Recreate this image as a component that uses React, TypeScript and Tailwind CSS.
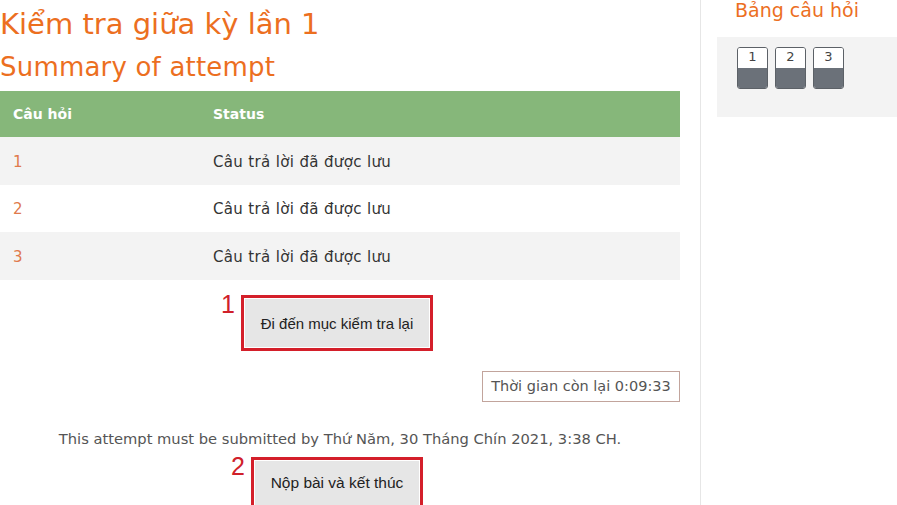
const font = { fontFamily: '"DejaVu Sans", "Noto Sans", sans-serif' };

const rows = [
  { n: "1", status: "Câu trả lời đã được lưu", shaded: true },
  { n: "2", status: "Câu trả lời đã được lưu", shaded: false },
  { n: "3", status: "Câu trả lời đã được lưu", shaded: true },
];

function Marked({ label, children }: { label: string; children: React.ReactNode }) {
  return (
    <div className="relative">
      <span
        className="absolute -left-[20px] -top-[3px] text-[25px] leading-none text-[#d0202a]"
        style={{ fontFamily: '"Liberation Sans", Arial, sans-serif' }}
      >
        {label}
      </span>
      <div className="border-[3px] border-[#d41f2a] p-px">{children}</div>
    </div>
  );
}

function NavButton({ n }: { n: string }) {
  return (
    <div className="flex h-[42px] w-[31px] flex-col overflow-hidden rounded-[3px] border border-[#5c6167]">
      <div className="flex h-[20px] items-start justify-center bg-white text-[13px] leading-[18px] text-[#444]">
        {n}
      </div>
      <div className="flex-1 bg-[#6b7179]" />
    </div>
  );
}

export default function App() {
  return (
    <div className="flex h-[505px] w-[897px] overflow-hidden bg-white" style={font}>
      <div className="w-[701px] shrink-0 border-r border-[#e6e6e6] pr-[20px]">
        <h1 className="mt-[6px] text-[29px] leading-[36px] text-[#ec6f1f]">
          Kiểm tra giữa kỳ lần 1
        </h1>
        <h2 className="mt-[10px] text-[26px] leading-[30px] tracking-[0.2px] text-[#ec6f1f]">
          Summary of attempt
        </h2>

        <table className="mt-[9px] w-[680px] border-collapse text-[14px]">
          <thead>
            <tr className="h-[46px] bg-[#86b77a] text-left text-white">
              <th className="w-[213px] pl-[13px] font-bold">Câu hỏi</th>
              <th className="font-bold">Status</th>
            </tr>
          </thead>
          <tbody>
            {rows.map((r) => (
              <tr key={r.n} className={r.shaded ? "h-[48px] bg-[#f3f3f3]" : "h-[47px] bg-white"}>
                <td className="pl-[13px] pt-[2px] text-[15px] text-[#e07a4c]">{r.n}</td>
                <td className="pt-[2px] text-[15px] tracking-[0.35px] text-[#333]">{r.status}</td>
              </tr>
            ))}
          </tbody>
        </table>

        <div className="mt-[15px] flex justify-center pr-[6px]">
          <Marked label="1">
            <button
              className="h-[48px] w-[184px] bg-[#e6e6e6] pt-[2px] text-[15px] text-[#222]"
              style={{ fontFamily: '"Liberation Sans", Arial, sans-serif' }}
            >
              Đi đến mục kiểm tra lại
            </button>
          </Marked>
        </div>

        <div className="mt-[20px] flex justify-end">
          <div className="flex h-[31px] w-[198px] items-center justify-center border border-[#c2a49c] text-[14.5px] text-[#555]">
            Thời gian còn lại 0:09:33
          </div>
        </div>

        <p className="mt-[26px] text-center text-[14.7px] text-[#555]">
          This attempt must be submitted by Thứ Năm, 30 Tháng Chín 2021, 3:38 CH.
        </p>

        <div className="mt-[7px] flex justify-center pr-[6px]">
          <Marked label="2">
            <button
              className="h-[44px] w-[164px] bg-[#e6e6e6] text-[15.5px] text-[#222]"
              style={{ fontFamily: '"Liberation Sans", Arial, sans-serif' }}
            >
              Nộp bài và kết thúc
            </button>
          </Marked>
        </div>
      </div>

      <div className="ml-[16px] flex-1">
        <div className="h-[37px] pl-[18px] text-[19px] leading-[20px] text-[#ec6f1f]">Bảng câu hỏi</div>
        <div className="flex h-[80px] gap-[7px] bg-[#f3f3f3] pl-[20px] pt-[10px]">
          <NavButton n="1" />
          <NavButton n="2" />
          <NavButton n="3" />
        </div>
      </div>
    </div>
  );
}
